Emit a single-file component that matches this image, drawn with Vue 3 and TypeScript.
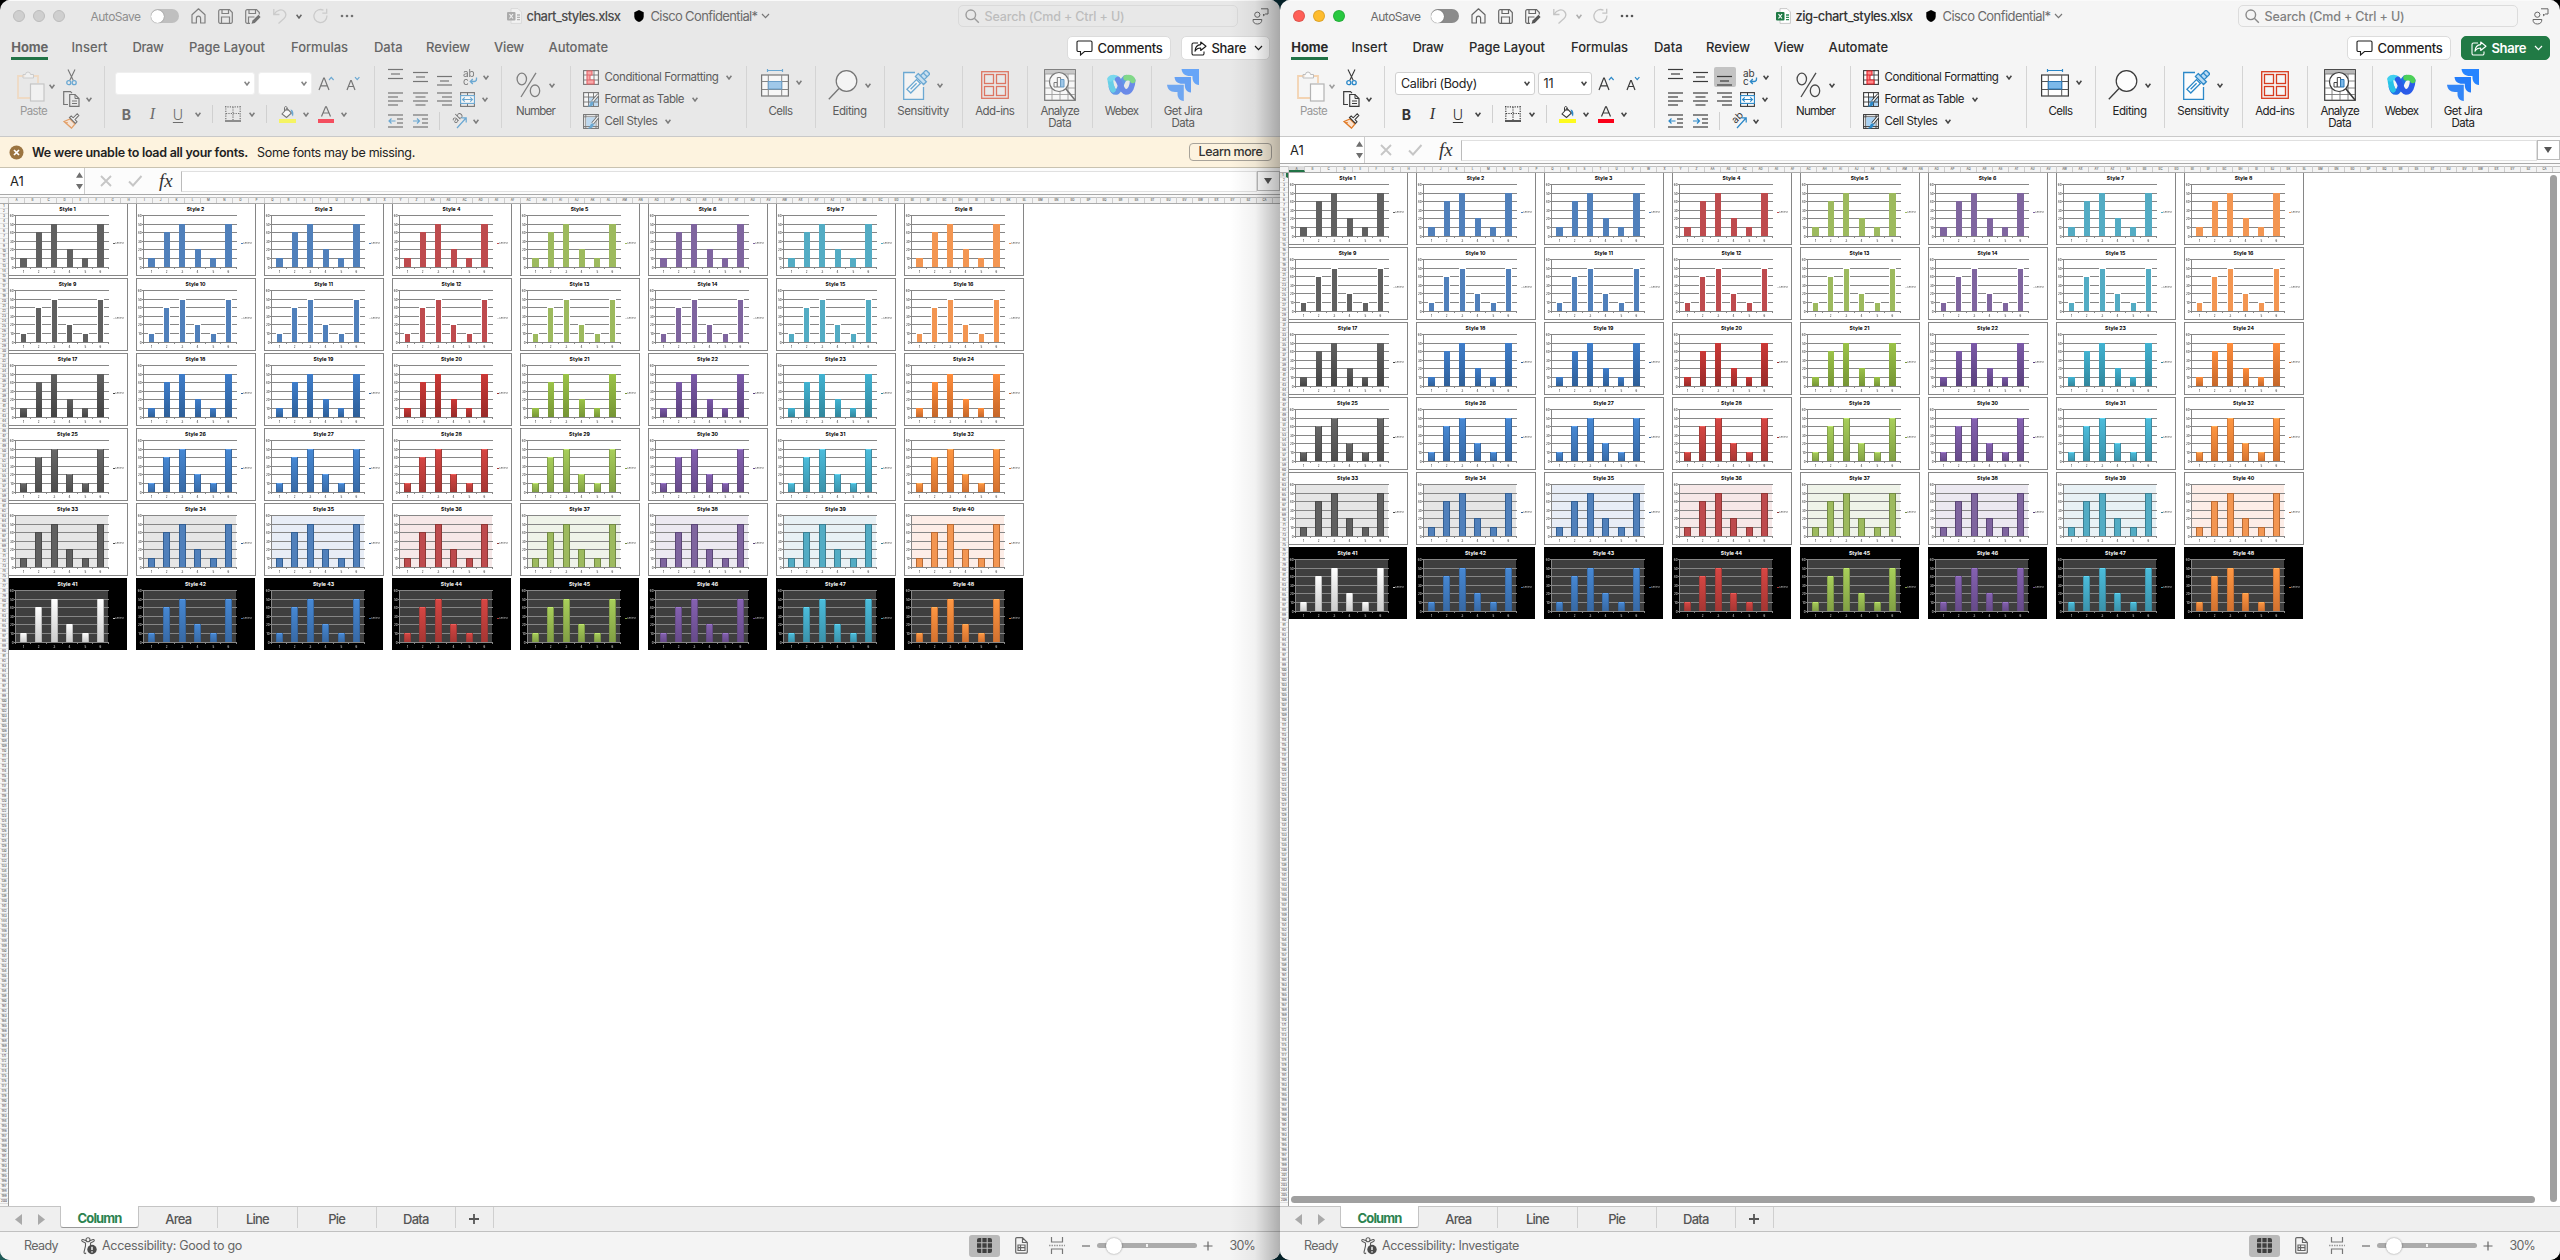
<script setup lang="ts">
import { h } from 'vue'
import type { DirectiveBinding, FunctionalComponent } from 'vue'

interface Win {
  id: string
  active: boolean
  file: string
  fileWidth: number
  ciscoWidth: number
  titleGap: number
  font: string
  size: string
  a11y: string
  a11yWidth: number
}

const windows: Win[] = [
  { id: 'l', active: false, file: 'chart_styles.xlsx', fileWidth: 94, ciscoWidth: 107, titleGap: 155, font: '', size: '', a11y: 'Accessibility: Good to go', a11yWidth: 140 },
  { id: 'r', active: true, file: 'zig-chart_styles.xlsx', fileWidth: 117, ciscoWidth: 108, titleGap: 144, font: 'Calibri (Body)', size: '11', a11y: 'Accessibility: Investigate', a11yWidth: 137 },
]

/* Tracks a label in or out so that it takes the given width. */
const vFit = {
  mounted(el: HTMLElement, b: DirectiveBinding<number>) {
    const n = (el.textContent ?? '').trim().length
    if (!n) return
    const w = el.getBoundingClientRect().width
    el.style.letterSpacing = `${(b.value - w) / n}px`
  },
}

const K = '#3b3b3b'
const B = '#2b88c8'
const lines = (rows: [number, number, number][]) =>
  rows.map(([x, y, w]) => `<path d="M${x} ${y}h${w}" stroke="${K}" stroke-width="1.2"/>`).join('')

const icons: Record<string, { w: number; h: number; d: string }> = {
  home: { w: 15, h: 16, d: '<path d="M1 6.800 7.500.8 14 6.800V15H9.600V10.200a2.100 2.100 0 0 0-4.200 0V15H1z" fill="none" stroke="#666" stroke-width="1.2" stroke-linejoin="round"/>' },
  save: { w: 15, h: 15, d: '<g fill="none" stroke="#666" stroke-width="1.2"><path d="M.7 2.200a1.500 1.500 0 0 1 1.500-1.500H11.500L14.300 3.500V12.800a1.500 1.500 0 0 1-1.500 1.500H2.200A1.500 1.500 0 0 1 .7 12.800z"/><path d="M4 .7V4.500H10.500V.7M3.500 14.300V8H11.500V14.300"/></g>' },
  saveEdit: { w: 16, h: 15, d: '<g fill="none" stroke="#666" stroke-width="1.2"><path d="M5 14.300H2.200A1.500 1.500 0 0 1 .7 12.800V2.200A1.500 1.500 0 0 1 2.200.7H11.500L14.300 3.500V5.500"/><path d="M4 .7V4.500H10.500V.7M3.500 14V8H9.500"/></g><path d="M6.500 14.800 7.500 11.500 13.500 5.800 15.600 7.900 9.800 13.900z" fill="#555"/>' },
  undo: { w: 14, h: 16, d: '<g fill="none" stroke="#c4c4c4" stroke-width="1.3"><path d="M.8 1V6.500H6.500"/><path d="M1 6.300C4 1.500 9 .8 11.500 3.500 14 6.500 12.500 9 11 10.500L5.500 15.500"/></g>' },
  redo: { w: 15, h: 16, d: '<g fill="none" stroke="#c4c4c4" stroke-width="1.3"><path d="M13.900 7.500A6.500 6.500 0 1 1 10.500 2.300"/><path d="M13.700.8V5.200H9.300"/></g>' },
  dots: { w: 14, h: 4, d: '<g fill="#555"><circle cx="2" cy="2" r="1.300"/><circle cx="7" cy="2" r="1.300"/><circle cx="12" cy="2" r="1.300"/></g>' },
  file: { w: 15, h: 16, d: '<path d="M4 .6H11L14.400 4V15.400H4z" fill="#fff" stroke="#bbb" stroke-width=".8"/><path d="M10 7h3M10 9.300h3M10 11.600h3" stroke="#2a8a55" stroke-width="1.300"/><rect y="4" width="8.500" height="8.500" rx="1" fill="#1f7a45"/><path d="M2.500 6 6 10.500M6 6 2.500 10.500" stroke="#fff" stroke-width="1.200"/>' },
  shield: { w: 10, h: 12, d: '<path d="M5 0 9.700 2.200V6.500C9.700 9.500 7.500 11.200 5 12 2.500 11.200.3 9.500.3 6.500V2.200z" fill="#000"/>' },
  search: { w: 15, h: 15, d: '<g fill="none" stroke="#8a8a8a" stroke-width="1.400"><circle cx="5.800" cy="5.800" r="4.800"/><path d="M9.300 9.300 13.800 13.800"/></g>' },
  people: { w: 17, h: 17, d: '<g fill="none" stroke="#666" stroke-width="1"><circle cx="5.300" cy="6.700" r="2.600"/><path d="M1 11.500H9.800C10 14.500 8 16 5.400 16 2.800 16 .8 14.500 1 11.500z"/><path d="M9 .8H16V6H13.500L11.500 7.800V6"/></g>' },
  comment: { w: 17, h: 16, d: '<path d="M1 2.300A1.300 1.300 0 0 1 2.300 1H14.700A1.300 1.300 0 0 1 16 2.300V10.200A1.300 1.300 0 0 1 14.700 11.500H8.500L4.500 15V11.500H2.300A1.300 1.300 0 0 1 1 10.200z" fill="none" stroke="currentColor" stroke-width="1.100"/>' },
  share: { w: 16, h: 15, d: '<g fill="none" stroke="currentColor" stroke-width="1.100" stroke-linejoin="round"><path d="M7 2H2.500A1.500 1.500 0 0 0 1 3.500V12.500A1.500 1.500 0 0 0 2.500 14H11.500A1.500 1.500 0 0 0 13 12.500V10.500"/><path d="M9.700 1 15 5.200 9.700 9.500V7C7 7 5.200 8 4 10.200 4.200 6 6.500 3.800 9.700 3.600z"/></g>' },
  chev: { w: 6, h: 5, d: '<path d="M.6.8 3 4 5.400.8" fill="none" stroke="#444" stroke-width="1.500"/>' },
  chevWide: { w: 9, h: 6, d: '<path d="M1 1 4.500 4.600 8 1" fill="none" stroke="currentColor" stroke-width="1.200"/>' },
  paste: { w: 28, h: 31, d: '<path d="M8 5H1V27H13M17 5H21V12" fill="none" stroke="#f3d3b2" stroke-width="1.800"/><path d="M6 7V3.500H8.500A2.500 2.500 0 0 1 13.500 3.500H16.500V7z" fill="#fff" fill-opacity=".5" stroke="#bdbdbd"/><rect x="13.500" y="13" width="13.500" height="17" fill="#fff" fill-opacity=".6" stroke="#b3b3b3" stroke-width="1.200"/>' },
  cut: { w: 11, h: 17, d: '<path d="M2 .5 7.300 11.500M9 .5 3.700 11.500" stroke="#3b3b3b" stroke-width="1.100"/><g fill="none" stroke="#2b88c8" stroke-width="1.300"><circle cx="2.800" cy="13.700" r="2"/><circle cx="8.200" cy="13.700" r="2"/></g>' },
  copy: { w: 17, h: 16, d: '<g fill="none" stroke="#3b3b3b" stroke-width="1.200"><path d="M5 13.500H.7V.7H7.500L9 2.200"/><path d="M6.700 3.500H12L16 7.500V15.300H6.700z"/><path d="M12 3.500V7.500H16M9 10H14M9 12.500H14" stroke-width="1"/></g>' },
  brush: { w: 17, h: 16, d: '<path d="M1 8.500 7 6 12 11 8.500 15.200z" fill="#fbe3cf" stroke="#e07b28" stroke-width="1.200"/><path d="M3.500 10.500 8 14.500M2 9.500 5 9.800" stroke="#e07b28"/><path d="M6.500 4.500 12.500 10.500 14 8.800 12 6.500 15.800 2.500 14.200.8 10.200 4.800 8.200 3z" fill="#fff" stroke="#3b3b3b" stroke-width="1.100"/>' },
  border: { w: 16, h: 16, d: '<path d="M.8 0V14M15.200 0V14M0 .8H16M8 1V14M1 7.500H15" stroke="#3b3b3b" stroke-width="1.200" stroke-dasharray="1.200 1.200" fill="none"/><path d="M0 15H16" stroke="#222" stroke-width="1.400"/>' },
  fill: { w: 17, h: 17, d: '<path d="M3 8 8 2.500 12.500 7 7.500 11.500z" fill="#fff" stroke="#3b3b3b" stroke-width="1.100"/><path d="M8 5V1.500A1.300 1.300 0 0 0 5.500 1.500V5" fill="none" stroke="#3b3b3b"/><path d="M11.500 3.500C14.500 4 14.800 7 14 10.500 12.800 9.500 12.500 8 12.600 6.800z" fill="#2b88c8"/><rect y="13" width="17" height="4" fill="#fdfb1f"/>' },
  fontColor: { w: 16, h: 17, d: '<path d="M3.500 10.500 7.600.8H8.400L12.500 10.500M5 7H11" fill="none" stroke="#3b3b3b" stroke-width="1.200"/><rect y="13" width="16" height="4" fill="#fb0019"/>' },
  bigA: { w: 17, h: 15, d: '<path d="M1 14 5.700 2H6.300L11 14M2.700 9.800H9.300" fill="none" stroke="#3b3b3b" stroke-width="1.200"/><path d="M11 4 13.300 1.400 15.600 4" fill="none" stroke="#2b88c8" stroke-width="1.200"/>' },
  smallA: { w: 14, h: 15, d: '<path d="M1 14 4.700 4.500H5.300L9 14M2.500 10.500H7.500" fill="none" stroke="#3b3b3b" stroke-width="1.200"/><path d="M9 1.200 11.200 3.600 13.400 1.200" fill="none" stroke="#2b88c8" stroke-width="1.200"/>' },
  alTop: { w: 15, h: 20, d: lines([[0, 2.500, 15], [3, 7, 9], [0, 11.500, 15]]) },
  alMid: { w: 15, h: 20, d: lines([[0, 5.500, 15], [3, 10, 9], [0, 14.500, 15]]) },
  alBot: { w: 15, h: 20, d: lines([[0, 9.500, 15], [3, 14, 9], [0, 18, 15]]) },
  alL: { w: 15, h: 16, d: lines([[0, 2, 15], [0, 6, 10], [0, 10, 15], [0, 14, 10]]) },
  alC: { w: 15, h: 16, d: lines([[0, 2, 15], [2.500, 6, 10], [0, 10, 15], [2.500, 14, 10]]) },
  alR: { w: 15, h: 16, d: lines([[0, 2, 15], [5, 6, 10], [0, 10, 15], [5, 14, 10]]) },
  outdent: { w: 15, h: 16, d: lines([[0, 2, 15], [9, 6, 6], [9, 10, 6], [0, 14, 15]]) + `<path d="M7.500 8H1M3.500 5.500 1 8 3.500 10.500" fill="none" stroke="${B}" stroke-width="1.200"/>` },
  indent: { w: 15, h: 16, d: lines([[0, 2, 15], [9, 6, 6], [9, 10, 6], [0, 14, 15]]) + `<path d="M0 8H6.500M4 5.500 6.500 8 4 10.500" fill="none" stroke="${B}" stroke-width="1.200"/>` },
  wrap: { w: 15, h: 18, d: '<text x="0" y="8.500" font-size="10" fill="#3b3b3b">ab</text><text x="0" y="16.500" font-size="10" fill="#3b3b3b">c</text><path d="M13.500 9.500V11A2.500 2.500 0 0 1 11 13.500H7.500M9.800 11 7.300 13.500 9.800 16" fill="none" stroke="#2b88c8" stroke-width="1.300"/>' },
  merge: { w: 15, h: 15, d: '<rect x=".6" y=".6" width="13.800" height="13.800" fill="none" stroke="#3b3b3b" stroke-width="1.100"/><path d="M7.500.6V14.400" stroke="#3b3b3b"/><rect x=".6" y="3.600" width="13.800" height="7.800" fill="#fff" stroke="#2b88c8" stroke-width="1.100"/><path d="M2.500 7.500H12.500M4.800 5.300 2.500 7.500 4.800 9.700M10.200 5.300 12.500 7.500 10.200 9.700" fill="none" stroke="#2b88c8" stroke-width="1.100"/>' },
  orient: { w: 17, h: 16, d: '<text x="0" y="0" font-size="10" fill="#3b3b3b" transform="translate(4.500 11) rotate(-45)">ab</text><path d="M6 15 15 5M10.500 4.800H15.200V9.500" fill="none" stroke="#2b88c8" stroke-width="1.200"/>' },
  percent: { w: 25, h: 26, d: '<g fill="none" stroke="#4a4a4a" stroke-width="1.300"><ellipse cx="5.800" cy="7" rx="4.700" ry="5.800"/><ellipse cx="19" cy="18.800" rx="4.700" ry="5.800"/><path d="M20 .8 5 25"/></g>' },
  condFmt: { w: 16, h: 15, d: '<rect x=".6" y=".6" width="14.800" height="13.800" fill="#fff" stroke="#3b3b3b" stroke-width="1.100"/><path d="M5 .6V14.400M11 .6V14.400M.6 5H15.400M.6 10H15.400" stroke="#3b3b3b" stroke-width=".9"/><path d="M4 1H9V5H4zM4 5H7V10H4zM4 10H11V14H4z" fill="#f88" stroke="#e0242c" stroke-width="1.100"/>' },
  fmtTable: { w: 16, h: 15, d: '<rect x=".6" y=".6" width="14.800" height="13.800" fill="#fff" stroke="#3b3b3b" stroke-width="1.100"/><path d="M5.500 5H15V14H5.500z" fill="#a9d2f3"/><path d="M5.500.6V14.400M10.500.6V14.400M.6 5H15.400M.6 10H15.400" stroke="#3b3b3b" stroke-width=".9"/><path d="M15.500 2.500 9.500 9.500" stroke="#333" stroke-width="3"/><path d="M15.300 2.700 9.500 9.500" stroke="#fff" stroke-width="1.200"/><path d="M10.500 9.800C9 8.800 7.300 10 7 12 6.600 13.500 5.500 13.800 4.500 14 7 15.300 11 14.500 10.500 9.800z" fill="#2b88c8"/>' },
  cellStyles: { w: 16, h: 15, d: '<rect x=".6" y=".6" width="14.800" height="13.800" fill="#fff" stroke="#3b3b3b" stroke-width="1.100"/><path d="M2.800.6V14.400M13 .6V14.400M.6 2.800H15.400M.6 12.500H15.400" stroke="#3b3b3b" stroke-width=".9"/><path d="M3.300 3.300H12.500V12H3.300z" fill="#a9d2f3"/><path d="M15.500 2.500 9.500 9.500" stroke="#333" stroke-width="3"/><path d="M15.300 2.700 9.500 9.500" stroke="#fff" stroke-width="1.200"/><path d="M10.500 9.800C9 8.800 7.300 10 7 12 6.600 13.500 5.500 13.800 4.500 14 7 15.300 11 14.500 10.500 9.800z" fill="#2b88c8"/>' },
  cells: { w: 28, h: 28, d: '<path d="M6.500 0V3M21.500 0V3M6.500 1.500H21.500" stroke="#2b88c8" stroke-width="1.200"/><rect x=".6" y="6" width="26.800" height="21" fill="#fff" stroke="#3b3b3b" stroke-width="1.200"/><path d="M7.300 6V27M20.700 6V27M.6 12.500H27.400M.6 20.500H27.400" stroke="#555" stroke-width="1"/><rect x="7.300" y="12.500" width="13.400" height="7.500" fill="#7cb9ea" stroke="#2b78b8"/>' },
  editing: { w: 30, h: 30, d: '<circle cx="18.500" cy="11" r="10.300" fill="#fff" fill-opacity=".8" stroke="#3b3b3b" stroke-width="1.200"/><path d="M11 18.500.8 29.300" stroke="#3b3b3b" stroke-width="1.300"/>' },
  sens: { w: 27, h: 30, d: '<g fill="none" stroke="#2b88c8" stroke-width="1.300"><path d="M12 2.500H.7V29.300H20.500V17" fill="#fff" fill-opacity=".7"/><g transform="rotate(45 17 11)"><path d="M13.500 12.500H19V26H13.500z" fill="#fff"/><path d="M16.200 15V23.500"/><path d="M10.500 7H22V11H10.500zM13.500-1H19V7H13.500z" fill="#b9dcf5"/><path d="M13.500 3H19"/></g></g>' },
  addins: { w: 28, h: 28, d: '<g fill="none" stroke="#d83b1e" stroke-width="1.300"><rect x=".7" y=".7" width="26.600" height="26.600"/><rect x="3.500" y="3.500" width="9" height="9"/><rect x="15.500" y="3.500" width="9" height="9"/><rect x="3.500" y="15.500" width="9" height="9"/><rect x="15.500" y="15.500" width="9" height="9"/></g>' },
  analyze: { w: 32, h: 32, d: '<rect x=".7" y=".7" width="30.600" height="30.600" fill="#fff" stroke="#3b3b3b" stroke-width="1.200"/><rect x="1" y="1" width="30" height="4" fill="#b8b8b8"/><path d="M1 5H31M1 12H31M1 19H31M1 25.500H31M8 19V31M16 22V31M24 5V31" stroke="#777" stroke-width=".9"/><circle cx="15" cy="13" r="9.500" fill="#fff" stroke="#3b3b3b" stroke-width="1.200"/><path d="M22 20 31 31" stroke="#3b3b3b" stroke-width="1.600"/><path d="M10 13.500H13.300V18H10z" fill="#fff" stroke="#444"/><path d="M13.300 8.500H16.600V18H13.300z" fill="#fff" stroke="#444"/><path d="M16.600 10.500H20V18H16.600z" fill="#7cb9ea" stroke="#2b78b8"/>' },
  webex: { w: 29, h: 22, d: '<g fill="none" stroke-linecap="round" stroke-width="5.600"><path d="M19 3.700C14.500 4.500 13.500 17 9.500 18 7.500 18.300 5.500 17 4.500 13" stroke="#1f6fe8"/><path d="M3.300 5.500C3.700 10 4.500 13.500 6 15.800" stroke="#27c3e6"/><path d="M3.300 4.800C4.500 3.200 8.500 2.700 10.800 5.500" stroke="#3fd0f0"/><path d="M10.800 5.500C13.300 9 14.500 17.500 19 18 23.500 18 25.500 12 25.700 6.500" stroke="#2a5be8"/><path d="M19 3.800C22.500 3.200 25 4 25.700 6.500" stroke="#4cd158"/></g>' },
  jira: { w: 32, h: 32, d: '<path d="M14.500 0H32V16C27.500 15.500 25.500 12.500 25.500 8.500V7H23C18 7 15 4.500 14.500 0z" fill="#2684ff"/><path d="M7.500 8H24V23.500C19.500 23 17.800 20 17.800 16.300V14.800H15.500C10.500 14.800 8 12.500 7.500 8z" fill="#247dfa"/><path d="M0 15.800H16.800V32C12.300 31.500 10.500 28.500 10.500 24.700V23H8C3 23 .5 20.300 0 15.800z" fill="#3386f7"/>' },
  warn: { w: 15, h: 15, d: '<circle cx="7.500" cy="7.500" r="7" fill="#9b7440"/><path d="M5 5 10 10M10 5 5 10" stroke="#fff" stroke-width="1.700"/>' },
  cross: { w: 12, h: 12, d: '<path d="M1 1 11 11M11 1 1 11" stroke="#c6c6c6" stroke-width="1.900"/>' },
  check: { w: 15, h: 12, d: '<path d="M1 6.500 5 10.500 13.500 1" fill="none" stroke="#c6c6c6" stroke-width="1.900"/>' },
  spin: { w: 7, h: 18, d: '<path d="M0 5.800 3.500.3 7 5.800zM0 12 3.500 17.500 7 12z" fill="#6f6f6f"/>' },
  drop: { w: 8, h: 6, d: '<path d="M0 0H8L4 6z" fill="#555"/>' },
  prev: { w: 7, h: 11, d: '<path d="M7 0V11L0 5.500z" fill="#a9a9a9"/>' },
  next: { w: 7, h: 11, d: '<path d="M0 0V11L7 5.500z" fill="#a9a9a9"/>' },
  plus: { w: 10, h: 10, d: '<path d="M5 0V10M0 5H10" stroke="#555" stroke-width="1.800"/>' },
  a11y: { w: 16, h: 18, d: '<g fill="none" stroke="#5b5b5b" stroke-width="1.100"><circle cx="7" cy="2.700" r="2"/><path d="M5.200 3.800 2 2.500C.6 2.300.3 4 1.500 4.500L4.500 6V9L3 15C3 16.800 4.500 17 5 15.800M8.800 3.800 12 2.500C13.400 2.300 13.700 4 12.500 4.500L9.500 6V8"/></g><circle cx="11" cy="12.500" r="4.700" fill="#4b4b4b"/><path d="M11 9.700V13M11 14.200V15.500" stroke="#fff" stroke-width="1.400"/>' },
  gridView: { w: 15, h: 15, d: '<rect width="15" height="15" rx="2" fill="#3f3f3f"/><path d="M4.800 0V15M10.200 0V15M0 4.800H15M0 10.200H15" stroke="#b9b9b9" stroke-width="1.100"/>' },
  pageView: { w: 13, h: 17, d: '<g fill="none" stroke="#666" stroke-width="1.200"><path d="M.7 1.800A1.100 1.100 0 0 1 1.800.7H7.500L12.300 5.500V15A1.100 1.100 0 0 1 11.200 16.200H1.800A1.100 1.100 0 0 1 .7 15zM7.500.7V5.500H12.300"/><path d="M3 8H10V13.500H3zM3 10.700H10M5.500 8V13.500"/></g>' },
  breakView: { w: 16, h: 17, d: '<path d="M2.500 0V5H13.500V0M2.500 17V12H13.500V17" fill="none" stroke="#777" stroke-width="1.200"/><path d="M0 8.500H16" stroke="#999" stroke-width="1.400" stroke-dasharray="1.500 1"/>' },
  minus: { w: 8, h: 2, d: '<path d="M0 1H8" stroke="#888" stroke-width="1.500"/>' },
  zoomPlus: { w: 10, h: 10, d: '<path d="M5 .500V9.500M.5 5H9.500" stroke="#666" stroke-width="1.200"/>' },
}

const Ic: FunctionalComponent<{ n: string; gap?: number }> = (p) => {
  const i = icons[p.n]
  return h('svg', {
    class: 'ic', width: i.w, height: i.h, viewBox: `0 0 ${i.w} ${i.h}`,
    style: p.gap ? { marginLeft: `${p.gap}px` } : undefined,
    innerHTML: i.d,
  })
}
Ic.props = ['n', 'gap']

const menu = [
  { t: 'Home', w: 37, end: 72 }, { t: 'Insert', w: 36, end: 133 }, { t: 'Draw', w: 31, end: 189.500 },
  { t: 'Page Layout', w: 76, end: 291.500 }, { t: 'Formulas', w: 57, end: 374.500 }, { t: 'Data', w: 28.500, end: 426.500 },
  { t: 'Review', w: 44, end: 494.500 }, { t: 'View', w: 30, end: 549 }, { t: 'Automate', w: 59.500, end: 620 },
].map((m, i, a) => ({ ...m, slot: m.end - (i ? a[i - 1].end : 11.800) }))

const styleRows = [
  { n: 'condFmt', t: 'Conditional Formatting', w: 114 },
  { n: 'fmtTable', t: 'Format as Table', w: 79.500 },
  { n: 'cellStyles', t: 'Cell Styles', w: 53 },
]

const bigs = [
  { n: 'cells', t: 'Cells', w: 24, slot: 68, drop: true, t2: '' },
  { n: 'editing', t: 'Editing', w: 34, slot: 68, drop: true, t2: '' },
  { n: 'sens', t: 'Sensitivity', w: 51.500, slot: 77, drop: true, t2: '' },
  { n: 'addins', t: 'Add-ins', w: 39, slot: 64.500, drop: false, t2: '' },
  { n: 'analyze', t: 'Analyze', w: 38.500, slot: 63.500, drop: false, t2: 'Data' },
  { n: 'webex', t: 'Webex', w: 33.500, slot: 58, drop: false, t2: '' },
  { n: 'jira', t: 'Get Jira', w: 38.500, slot: 63, drop: false, t2: 'Data' },
]

const colName = (i: number): string => (i < 26 ? '' : String.fromCharCode(64 + Math.floor(i / 26))) + String.fromCharCode(65 + (i % 26))
const columns = Array.from({ length: 79 }, (_, i) => colName(i))

const flat = ['#606060', '#5080bb', '#5080bb', '#be4b4e', '#9dba5e', '#7f659f', '#53acc4', '#f39652']
const deep = [['#606060', '#434343'], ['#3e7dca', '#2e5f98'], ['#3e7dca', '#2e5f98'], ['#cb3836', '#982b29'], ['#9bc348', '#769535'], ['#7b59a8', '#5a417d'], ['#41b3d2', '#31869c'], ['#ff8d3b', '#c5672a']]
const soft = [['#686868', '#4c4c4c'], ['#4688d4', '#3869a4'], ['#4688d4', '#3869a4'], ['#d74643', '#a53633'], ['#a8cf5a', '#819f44'], ['#8561b1', '#664a89'], ['#4bbddc', '#3b92aa'], ['#ff9742', '#d2712f']]
const edge = ['#4a4a4a', '#335f93', '#335f93', '#8e3836', '#728a43', '#5b4677', '#3b7f93', '#b86a34']
const glow = ['#8a8a8a', '#69aaf5', '#69aaf5', '#f56a66', '#caf07c', '#a583d4', '#6fe0fb', '#ffba66']
const wall = ['#e6e6e6', '#e6e6e6', '#e8edf6', '#f6e8e8', '#eff3e9', '#ece9f1', '#e8f1f5', '#fdede7']
const grid = [12, 21, 29, 38, 46, 55, 64]
const values = [1, 4, 5, 2, 1, 5]
const thinX = [[12, 7], [28, 6], [43, 6], [59, 6], [74, 6], [89, 7]]
const wideX = [12, 27, 43, 58, 74, 89]
const ticks = [7, 22, 38, 54, 69, 84, 100]

interface Bar { x: number; y: number; w: number; h: number }
const charts = Array.from({ length: 48 }, (_, i) => {
  const row = Math.floor(i / 8)
  const col = i % 8
  const plain = row === 0 || row === 2
  const pair = row === 5 && col === 0 ? ['#ffffff', '#cccccc'] : row === 2 ? deep[col] : soft[col]
  const bars: Bar[] = values.map((v, k) => {
    const y = grid[6 - v]
    return plain ? { x: thinX[k][0], w: thinX[k][1], y, h: 64 - y } : { x: wideX[k], w: 7, y, h: 64 - y }
  })
  return {
    n: i + 1, row, col, dark: row === 5, pair, bars,
    graded: row === 2 || row === 3 || row === 5,
    fill: flat[col],
    line: row === 1 ? '#ffffff' : row === 4 ? edge[col] : '',
    side: row === 5 && col === 0 ? '#aaaaaa' : edge[col],
    top: row === 5 && col === 0 ? '#ffffff' : glow[col],
    bevel: row === 3 || row === 5,
    wall: row === 4 ? wall[col] : row === 5 ? '#3f3f3f' : '',
  }
})

const sheets = [{ t: 'Area', w: 26 }, { t: 'Line', w: 23 }, { t: 'Pie', w: 17 }, { t: 'Data', w: 25.500 }]
</script>

<template>
  <div class="desk">
    <section v-for="w in windows" :key="w.id" class="win" :class="w.active ? 'active' : 'inactive'">
      <header class="title">
        <div class="lights"><i class="red" /><i class="amber" /><i class="green" /></div>
        <span v-fit="50" class="auto">AutoSave</span>
        <span class="toggle"><i /></span>
        <div class="quick">
          <Ic n="home" :gap="12" /><Ic n="save" :gap="12" /><Ic n="saveEdit" :gap="12" />
          <Ic n="undo" :gap="12" /><Ic n="chev" :gap="9" class="qchev" /><Ic n="redo" :gap="11" /><Ic n="dots" :gap="12.500" />
        </div>
        <div class="doc">
          <Ic n="file" :gap="w.titleGap - 2" class="fileic" />
          <b v-fit="w.fileWidth">{{ w.file }}</b>
          <Ic n="shield" :gap="13" />
          <span v-fit="w.ciscoWidth" class="cisco">Cisco Confidential*</span>
          <Ic n="chevWide" :gap="3.500" />
        </div>
        <div class="search"><Ic n="search" /><span v-fit="140">Search (Cmd + Ctrl + U)</span></div>
        <Ic n="people" class="people" />
      </header>

      <nav class="menu">
        <div v-for="(m, i) in menu" :key="m.t" class="mi" :class="{ on: i === 0 }" :style="{ width: m.slot + 'px' }">
          <span v-fit="m.w">{{ m.t }}</span>
        </div>
        <div class="actions">
          <button class="btn comments"><Ic n="comment" /><span v-fit="65">Comments</span></button>
          <button class="btn share"><Ic n="share" /><span v-fit="34.500">Share</span><Ic n="chevWide" :gap="7.500" /></button>
        </div>
      </nav>

      <div class="ribbon">
        <div class="g clip">
          <div class="paste">
            <div class="pico"><Ic n="paste" /><Ic n="chev" :gap="4" /></div>
            <span v-fit="27" class="lab">Paste</span>
          </div>
          <div class="tri">
            <div class="r"><Ic n="cut" :gap="3" /></div>
            <div class="r"><Ic n="copy" /><Ic n="chev" :gap="6" /></div>
            <div class="r"><Ic n="brush" /></div>
          </div>
        </div>
        <i class="sep" />
        <div class="g font">
          <div class="fr">
            <div class="box fam"><span v-fit="76">{{ w.font }}</span><Ic n="chev" /></div>
            <div class="box siz"><span>{{ w.size }}</span><Ic n="chev" /></div>
            <Ic n="bigA" :gap="6.500" /><Ic n="smallA" :gap="11" />
          </div>
          <div class="fr second">
            <span class="ch bold">B</span><span class="ch ital">I</span><span class="ch under">U</span><Ic n="chev" :gap="6" />
            <i class="ssep a" /><Ic n="border" :gap="12" /><Ic n="chev" :gap="8" />
            <i class="ssep b" /><Ic n="fill" :gap="12" /><Ic n="chev" :gap="7" />
            <Ic n="fontColor" :gap="9" /><Ic n="chev" :gap="7" />
          </div>
        </div>
        <i class="sep" />
        <div class="g align">
          <div class="r"><Ic n="alTop" /><Ic n="alMid" :gap="9.500" /><span class="pick"><Ic n="alBot" /></span><Ic n="wrap" :gap="7" /><Ic n="chev" :gap="5.500" /></div>
          <div class="r"><Ic n="alL" /><Ic n="alC" :gap="9.500" /><Ic n="alR" :gap="9" /><Ic n="merge" :gap="8.500" /><Ic n="chev" :gap="7" /></div>
          <div class="r"><Ic n="outdent" /><Ic n="indent" :gap="9.500" /><i class="ssep c" /><Ic n="orient" :gap="11" /><Ic n="chev" :gap="5.500" /></div>
        </div>
        <i class="sep" />
        <div class="g big num">
          <div class="bico"><Ic n="percent" /><Ic n="chev" :gap="8" /></div>
          <span v-fit="39" class="lab">Number</span>
        </div>
        <i class="sep" />
        <div class="g styles">
          <div v-for="s in styleRows" :key="s.n" class="r">
            <Ic :n="s.n" /><span v-fit="s.w" class="lab">{{ s.t }}</span><Ic n="chev" :gap="7.500" />
          </div>
        </div>
        <template v-for="b in bigs" :key="b.n">
          <i class="sep" />
          <div class="g big" :style="{ width: b.slot + 'px' }">
            <div class="bico" :class="b.n"><Ic :n="b.n" /><Ic v-if="b.drop" n="chev" :gap="7" /></div>
            <span v-fit="b.w" class="lab">{{ b.t }}</span>
            <span v-if="b.t2" v-fit="23" class="lab two">{{ b.t2 }}</span>
          </div>
        </template>
      </div>

      <div v-if="!w.active" class="notice">
        <Ic n="warn" /><b v-fit="216">We were unable to load all your fonts.</b><span v-fit="158">Some fonts may be missing.</span>
        <button><span v-fit="64">Learn more</span></button>
      </div>

      <div class="formula">
        <div class="name"><span>A1</span><Ic n="spin" /></div>
        <Ic n="cross" :gap="15" /><Ic n="check" :gap="16" /><em>fx</em>
        <div class="input" />
        <div class="more"><Ic n="drop" /></div>
      </div>

      <div class="cols">
        <i class="corner" />
        <span v-for="(c, i) in columns" :key="c" :class="{ sel: w.active && i === 0 }">{{ c }}</span>
      </div>

      <div class="sheet">
        <div class="rows"><span v-for="r in (w.active ? 206 : 200)" :key="r" :class="{ sel: w.active && r === 1 }">{{ r }}</span></div>
        <div class="charts">
          <svg v-for="c in charts" :key="c.n" width="120" height="73" viewBox="0 0 120 73" shape-rendering="crispEdges" class="chart">
            <defs>
              <linearGradient :id="`${w.id}${c.n}`" x1="0" y1="0" x2="0" y2="1">
                <stop offset="0" :stop-color="c.pair[0]" /><stop offset="1" :stop-color="c.pair[1]" />
              </linearGradient>
            </defs>
            <rect v-if="c.dark" width="119" height="72" fill="#000" />
            <rect v-else x=".5" y=".5" width="119" height="72" fill="#fff" stroke="#868686" />
            <rect v-if="c.wall" x="8" y="12" width="92" height="52" :fill="c.wall" />
            <g fill="#868686">
              <rect v-for="y in grid" :key="y" x="6" :y="y" width="94.500" height="1" />
              <rect x="7" y="12" width="1" height="53" />
              <rect v-for="x in ticks" :key="x" :x="x" y="65" width="1" height="1" />
            </g>
            <g v-for="(b, k) in c.bars" :key="k">
              <rect :x="b.x" :y="b.y" :width="b.w" :height="b.h" :fill="c.graded ? `url(#${w.id}${c.n})` : c.fill" />
              <rect v-if="c.line" :x="b.x + .5" :y="b.y + .5" :width="b.w - 1" :height="b.h" fill="none" :stroke="c.line" />
              <template v-if="c.bevel">
                <rect :x="b.x" :y="b.y" width="1" :height="b.h" :fill="c.side" opacity=".55" />
                <rect :x="b.x + b.w - 1" :y="b.y" width="1" :height="b.h" :fill="c.side" opacity=".75" />
                <rect :x="b.x + 1" :y="b.y" :width="b.w - 2" height="1" :fill="c.top" opacity=".75" />
              </template>
            </g>
            <rect x="7" y="64" width="93" height="1" fill="#868686" />
            <g :fill="c.dark ? '#fff' : '#000'" text-anchor="middle">
              <text x="59.500" y="7.600" class="ct">Style {{ c.n }}</text>
              <text v-for="k in 6" :key="k" :x="wideX[k - 1] + 3.500" y="69.600" class="tiny">{{ k }}</text>
              <text v-for="(y, k) in grid" :key="y" x="5.500" :y="y + 1.500" class="tiny" text-anchor="end">{{ (6 - k) * 10 }}</text>
              <text x="111.500" y="41.300" class="leg">Series1</text>
            </g>
            <rect x="105" y="40" width="2" height="1" :fill="c.row === 1 ? '#ddd' : c.graded ? c.pair[1] : c.line || c.fill" />
          </svg>
        </div>
        <template v-if="w.active"><i class="vbar" /><i class="hbar" /></template>
      </div>

      <div class="tabs">
        <Ic n="prev" :gap="15" /><Ic n="next" :gap="15.500" />
        <div class="tab cur"><b v-fit="44">Column</b></div>
        <div v-for="s in sheets" :key="s.t" class="tab"><span v-fit="s.w">{{ s.t }}</span></div>
        <div class="tab add"><Ic n="plus" /></div>
      </div>

      <footer class="status">
        <span v-fit="34" class="ready">Ready</span><Ic n="a11y" :gap="22.500" /><span v-fit="w.a11yWidth" class="acc">{{ w.a11y }}</span>
        <div class="views">
          <span class="gv"><Ic n="gridView" /></span><Ic n="pageView" :gap="15" /><Ic n="breakView" :gap="21.500" />
          <Ic n="minus" :gap="17" /><span class="track"><i class="mark" /><i class="knob" /></span><Ic n="zoomPlus" :gap="5.500" />
          <span v-fit="25.500" class="pct">30%</span>
        </div>
      </footer>
      <i v-if="!w.active" class="shade" />
    </section>
  </div>
</template>

<style>
body { margin: 0; background: #06191f; overflow: hidden; }
</style>

<style scoped>
* { box-sizing: border-box; }
.desk { display: flex; width: 2560px; height: 1260px; background: linear-gradient(180deg, transparent 50%, #1f5a57 50%) 0 0 / 20px 100% no-repeat, linear-gradient(90deg, #000 0, #000 20px, #052128 600px, #052128 2500px, #000 2550px); font-family: Inter, "Liberation Sans", sans-serif; font-size: 13px; color: #222; }
.win { position: relative; display: flex; flex-direction: column; width: 1280px; height: 1260px; border-radius: 10px; overflow: hidden; background: #f5f5f5; }
.inactive { background: #e8e8e8; }
.win span, .win b { white-space: nowrap; }
.ic { display: block; flex: none; }
.ic :deep(text) { font-family: Inter, sans-serif; }

.title { display: flex; align-items: center; height: 32px; flex: none; border-top: 1px solid #fafafa; padding-bottom: 1px; }
.lights { display: flex; gap: 8px; margin-left: 13px; width: 77.500px; flex: none; }
.lights i { width: 12px; height: 12px; border-radius: 50%; border: 1px solid rgba(0, 0, 0, .12); }
.red { background: #ff5f57; } .amber { background: #febc2e; } .green { background: #28c840; }
.inactive .lights i { background: #cfcfcf; border-color: #bcbcbc; }
.auto { color: #6b6b6b; font-size: 12px; }
.toggle { margin-left: 10px; width: 28px; height: 14px; border-radius: 7px; background: #8b8b8b; flex: none; }
.toggle i { display: block; width: 13px; height: 13px; margin: .5px; border-radius: 50%; background: #fff; box-shadow: 0 0 1px #555; }
.inactive .toggle { background: #bfbfbf; }
.inactive .auto { color: #8e8e8e; }
.quick, .doc { display: flex; align-items: center; }
.active .qchev { opacity: .4; }
.inactive .quick > * { opacity: .8; }
.doc { color: #777; }
.inactive .fileic { opacity: .45; filter: grayscale(1); }
.doc b { font-weight: 500; font-size: 13px; margin-left: 4.500px; color: #333; }
.inactive .doc b { color: #4c4c4c; }
.cisco { margin-left: 7px; font-size: 13px; color: #6b6b6b; }
.search { display: flex; align-items: center; gap: 5px; width: 280px; height: 22px; margin-left: auto; padding-left: 6px; border: 1px solid #dcdcdc; border-radius: 5px; color: #818181; font-weight: 500; font-size: 12.500px; flex: none; }
.inactive .search { color: #bdbdbd; border-color: #dadada; }
.inactive .search .ic { opacity: .8; }
.people { margin: 0 11.500px 0 14px; }

.menu { display: flex; height: 30px; flex: none; padding-left: 11.300px; }
.mi { height: 28px; padding-top: 7px; line-height: 16px; font-size: 13px; font-weight: 500; color: #2a2a2a; flex: none; }
.mi span { display: inline-block; }
.mi.on span { font-weight: 650; height: 21px; border-bottom: 3px solid #217346; }
.inactive .mi { color: #666; }
.actions { margin-left: auto; display: flex; padding: 4px 10.500px 0 0; gap: 10.500px; align-items: flex-start; }
.btn { display: flex; align-items: center; height: 24px; padding: 0; border: 1px solid #dcdcdc; border-radius: 5px; background: #fff; font: 500 13px Inter, sans-serif; color: #1d1d1d; }
.comments { width: 104px; padding-left: 8px; gap: 5px; }
.share { width: 88.500px; padding-left: 9px; gap: 0; }
.share span { margin-left: 4.500px; }
.active .share { background: #217a45; border-color: #217a45; color: #fff; font-weight: 600; }

.ribbon { display: flex; height: 75px; flex: none; border-bottom: 1px solid #c9c9c9; padding-top: 4px; }
.sep { width: 1px; height: 62px; background: #d4d4d4; flex: none; }
.g { flex: none; display: flex; }
.lab { font-size: 11.500px; line-height: 12px; color: #222; }
.inactive .lab { color: #5c5c5c; }
.inactive .ribbon .ic { opacity: .66; }
.r { display: flex; align-items: center; height: 22px; }
.clip { width: 104px; }
.paste { width: 63px; padding: 4px 0 0 16.500px; }
.pico { display: flex; align-items: center; height: 32px; }
.active .pico .ic:last-child { opacity: .5; }
.paste .lab { display: inline-block; margin: 3px 0 0 3.500px; color: #999; }
.font { width: 268.500px; flex-direction: column; padding-left: 10px; }
.fr { display: flex; align-items: center; height: 34px; }
.fr.second { height: 28px; }
.box { display: flex; align-items: center; height: 23px; background: #fff; border: 1px solid #d0d0d0; border-radius: 3px; padding: 0 4px 0 5px; font-size: 12.500px; flex: none; }
.inactive .box { border-color: #efefef; }
.fam { width: 140px; }
.siz { width: 54px; margin-left: 2.500px; }
.fam .ic, .siz .ic { margin-left: auto; }
.ch { width: 25.500px; text-align: center; color: #333; font-size: 14px; }
.inactive .ch { color: #6d6d6d; }
.bold { font-weight: 700; width: 23px; } .ital { font-family: "Liberation Serif", serif; font-style: italic; font-size: 16px; width: 29px; } .under { text-decoration: underline; font-weight: 300; width: 22px; text-underline-offset: 2px; }
.ssep { width: 1px; height: 18px; background: #d0d0d0; flex: none; }
.a { margin-left: 11px; } .b { margin-left: 11px; } .c { margin-left: 11px; }
.align { width: 126px; flex-direction: column; padding-left: 13.500px; }
.pick { width: 22px; height: 20px; margin-left: 6px; padding-left: 3.500px; border-radius: 2px; }
.active .pick { background: #c3c3c3; }
.big { flex-direction: column; align-items: center; }
.num { width: 68px; }
.bico { display: flex; align-items: center; justify-content: center; height: 38px; margin-bottom: 1px; }
.styles { width: 175px; flex-direction: column; padding-left: 12px; }
.styles .lab { margin-left: 6px; }
.cells { padding: 0 0 5px 2px; }

.notice { display: flex; align-items: center; height: 31px; flex: none; background: #fdf3df; border-bottom: 1px solid #c9c2b0; padding: 0 8px 0 8.500px; color: #222; font-size: 12.500px; }
.notice b { font-weight: 600; margin: 0 9px 0 8.500px; }
.notice button { margin-left: auto; width: 83px; height: 18px; padding: 0; border: 1px solid #a8a39a; border-radius: 4px; background: transparent; font: 500 12.500px/14px Inter, sans-serif; color: #333; }
.formula { display: flex; align-items: center; height: 27px; flex: none; background: #fcfcfc; border-bottom: 1px solid #a9a9a9; }
.name { display: flex; align-items: center; justify-content: space-between; width: 85px; height: 26px; padding: 0 1.500px 1px 10px; border-right: 1px solid #ccc; background: #fff; }
.formula em { margin-left: 16px; width: 23px; font: italic 19px "Liberation Serif", serif; color: #333; line-height: 20px; }
.input { height: 21px; width: 1075.500px; border: 1px solid #e0e0e0; border-left-color: #bbb; background: #fff; flex: none; margin-left: -1px; }
.more { flex: 1; height: 20px; display: flex; align-items: center; justify-content: center; border: 1px solid #bbb; background: #fff; }

.cols { display: flex; height: 9px; flex: none; border-top: 2px solid #fafafa; border-bottom: 1px solid #aaa; background: #f4f4f4; overflow: hidden; box-shadow: inset 0 1px #c0c0c0; }
.corner { width: 9px; border-right: 1px solid #ccc; flex: none; }
.cols span { width: 16px; flex: none; text-align: center; font-size: 3px; line-height: 6px; color: #666; border-right: 1px solid #ccc; font-weight: 600; }
.cols span:nth-child(n + 28) { font-size: 2.800px; }
.cols .sel { border-bottom: 2px solid #217346; background: #ddd; }
.sheet { position: relative; flex: 1; min-height: 0; display: flex; overflow: hidden; background: #fff; }
.rows { width: 9px; flex: none; background: #f7f7f7; border-right: 1px solid #999; z-index: 1; }
.rows span { display: block; height: 5px; font-size: 3px; line-height: 4px; text-align: center; color: #555; border-bottom: 1px solid #dedede; font-weight: 600; }
.rows .sel { border-right: 2px solid #217346; background: #ddd; }
.charts { display: grid; grid-template-columns: repeat(8, 120px); gap: 2px 8px; align-content: start; margin: -1px 0 0 -1px; }
.chart { display: block; }
.ct { font: 700 5.200px Inter, sans-serif; }
.tiny { font: 600 2.800px Inter, sans-serif; opacity: .75; }
.leg { font: 400 2.700px Inter, sans-serif; opacity: .7; }
.vbar { position: absolute; right: 3px; top: 2px; bottom: 4px; width: 7px; border-radius: 4px; background: #a0a0a0; }
.hbar { position: absolute; left: 11px; right: 25px; bottom: 3px; height: 7px; border-radius: 4px; background: #a0a0a0; }

.tabs { display: flex; align-items: center; height: 26px; flex: none; background: #efefef; border-top: 1px solid #c4c4c4; border-bottom: 1px solid #c0c0c0; }
.tab { display: flex; align-items: center; justify-content: center; width: 79.200px; height: 21px; margin-bottom: 4px; padding-top: 3px; border-right: 1px solid #cfcfcf; font-size: 13px; color: #555; font-weight: 500; flex: none; }
.tab.cur { margin: -2px 0 4px 15.500px; height: 23px; background: #fff; border: 1px solid #c4c4c4; border-top: 0; border-bottom: 1.500px solid #999; border-radius: 0 0 3px 3px; color: #2c8350; padding-top: 5px; }
.tab.cur b { font-weight: 650; }
.tab.add { width: 38px; }
.status { display: flex; align-items: center; height: 28px; flex: none; background: #f4f4f4; color: #666; font-size: 12.500px; padding-bottom: 1px; }
.ready { margin-left: 24px; }
.acc { margin-left: 5.500px; }
.views { margin-left: auto; display: flex; align-items: center; padding-right: 25px; }
.gv { display: flex; align-items: center; justify-content: center; width: 31px; height: 22px; border-radius: 3px; background: #b9b9b9; }
.track { position: relative; width: 100px; height: 5px; margin-left: 7px; border-radius: 3px; background: #ababab; }
.knob { position: absolute; left: 9px; top: -5.500px; width: 16px; height: 16px; border-radius: 50%; background: #fff; box-shadow: 0 0 2px rgba(0, 0, 0, .45); }
.mark { position: absolute; left: 49px; top: 1px; width: 2px; height: 3px; background: #f4f4f4; }
.pct { margin-left: 17px; }
.shade { position: absolute; top: 0; right: 0; bottom: 0; width: 50px; background: linear-gradient(90deg, rgba(0, 0, 0, 0), rgba(0, 0, 0, .05) 50%, rgba(0, 0, 0, .28)); }
</style>
